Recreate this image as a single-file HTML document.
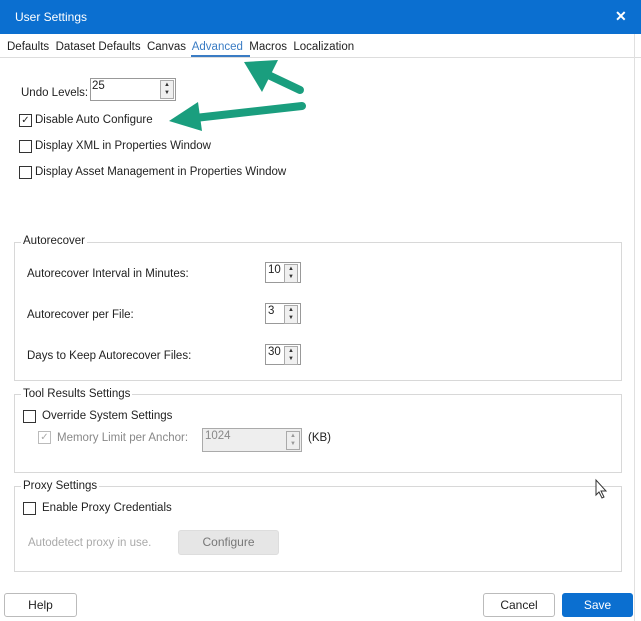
<!DOCTYPE html>
<html><head><style>
body{margin:0;width:641px;height:621px;background:#fff;font-family:"Liberation Sans",sans-serif;font-size:11.5px;color:#222;position:relative;overflow:hidden}
.a{position:absolute;white-space:nowrap}
.cb{position:absolute;width:11px;height:11px;border:1px solid #333;background:#fff}
.box{position:absolute;border:1px solid #d8d8d8}
.lg{position:absolute;background:#fff;padding:0 2px}
.inp{position:absolute;border:1px solid #999;background:#fff;height:19px}
.sp{position:absolute;width:12px;height:17px;border:1px solid #aaa;background:#f0f0f0;font-size:6px;line-height:8px;text-align:center;color:#333}
.btn{position:absolute;border:1px solid #bbb;border-radius:3px;background:#fff;text-align:center;font-size:12px}
</style></head><body>
<div class="a" style="left:0;top:0;width:641px;height:34px;background:#0b6fd0"></div>
<div class="a" style="left:15px;top:10px;color:#fff;font-size:12px">User Settings</div>
<div class="a" style="left:615px;top:8px;color:#fff;font-size:14px;font-weight:bold">✕</div>
<div class="a" style="left:7px;top:41px">Defaults&nbsp; Dataset Defaults&nbsp; Canvas&nbsp; <span style="color:#3a7cc4">Advanced</span>&nbsp; Macros&nbsp; Localization</div>
<div class="a" style="left:0;top:57px;width:641px;height:1px;background:#ddd"></div>
<div class="a" style="left:191px;top:55px;width:59px;height:2px;background:#3a7cc4"></div>
<div class="a" style="left:21px;top:87px">Undo Levels:</div>
<div class="inp" style="left:90px;top:78px;width:84px;height:21px"><span style="position:absolute;left:1px;top:1px">25</span></div>
<div class="sp" style="left:160px;top:80px">▲<br>▼</div>
<div class="cb" style="left:19px;top:114px;font-size:10px;line-height:11px;text-align:center">✓</div>
<div class="a" style="left:35px;top:114px">Disable Auto Configure</div>
<div class="cb" style="left:19px;top:140px"></div>
<div class="a" style="left:35px;top:140px">Display XML in Properties Window</div>
<div class="cb" style="left:19px;top:166px"></div>
<div class="a" style="left:35px;top:166px">Display Asset Management in Properties Window</div>

<div class="box" style="left:14px;top:242px;width:606px;height:137px"></div>
<div class="lg" style="left:21px;top:235px">Autorecover</div>
<div class="a" style="left:27px;top:268px">Autorecover Interval in Minutes:</div>
<div class="a" style="left:27px;top:309px">Autorecover per File:</div>
<div class="a" style="left:27px;top:350px">Days to Keep Autorecover Files:</div>
<div class="inp" style="left:265px;top:262px;width:34px"><span style="position:absolute;left:2px;top:1px">10</span></div>
<div class="sp" style="left:284px;top:264px">▲<br>▼</div>
<div class="inp" style="left:265px;top:303px;width:34px"><span style="position:absolute;left:2px;top:1px">3</span></div>
<div class="sp" style="left:284px;top:305px">▲<br>▼</div>
<div class="inp" style="left:265px;top:344px;width:34px"><span style="position:absolute;left:2px;top:1px">30</span></div>
<div class="sp" style="left:284px;top:346px">▲<br>▼</div>

<div class="box" style="left:14px;top:394px;width:606px;height:77px"></div>
<div class="lg" style="left:21px;top:388px">Tool Results Settings</div>
<div class="cb" style="left:23px;top:410px"></div>
<div class="a" style="left:42px;top:410px">Override System Settings</div>
<div class="cb" style="left:38px;top:431px;border-color:#bbb;color:#aaa;font-size:10px;line-height:11px;text-align:center">✓</div>
<div class="a" style="left:57px;top:432px;color:#888">Memory Limit per Anchor:</div>
<div class="inp" style="left:202px;top:428px;width:98px;height:22px;background:#eee;border-color:#aaa"><span style="position:absolute;left:2px;top:1px;color:#888">1024</span></div>
<div class="sp" style="left:286px;top:431px;background:#eee;color:#999">▲<br>▼</div>
<div class="a" style="left:308px;top:432px">(KB)</div>

<div class="box" style="left:14px;top:486px;width:606px;height:84px"></div>
<div class="lg" style="left:21px;top:480px">Proxy Settings</div>
<div class="cb" style="left:23px;top:502px"></div>
<div class="a" style="left:42px;top:502px">Enable Proxy Credentials</div>
<div class="a" style="left:28px;top:537px;color:#aaa">Autodetect proxy in use.</div>
<div class="btn" style="left:178px;top:530px;width:99px;height:23px;line-height:23px;background:#e6e6e6;border-color:#ddd;color:#777">Configure</div>

<div class="a" style="left:634px;top:34px;width:1px;height:587px;background:#e0e0e0"></div>
<div class="btn" style="left:4px;top:593px;width:71px;height:22px;line-height:22px">Help</div>
<div class="btn" style="left:483px;top:593px;width:70px;height:22px;line-height:22px">Cancel</div>
<div class="btn" style="left:562px;top:593px;width:69px;height:22px;line-height:22px;background:#0b6fd0;border-color:#0b6fd0;color:#fff">Save</div>

<svg class="a" style="left:0;top:0" width="641" height="621">
<g stroke="#1a9e7e" stroke-width="8" stroke-linecap="round" fill="#1a9e7e">
<line x1="300" y1="90" x2="262" y2="72"/>
<line x1="302" y1="106" x2="195" y2="118"/>
</g>
<polygon points="244,62 278,60 262,92" fill="#1a9e7e"/>
<polygon points="169,121 198,102 202,131" fill="#1a9e7e"/>
<path d="M596 480 L596 495 L599 492 L602 498 L604 497 L601 491 L606 491 Z" fill="#fff" stroke="#333" stroke-width="1"/>
</svg>
</body></html>
